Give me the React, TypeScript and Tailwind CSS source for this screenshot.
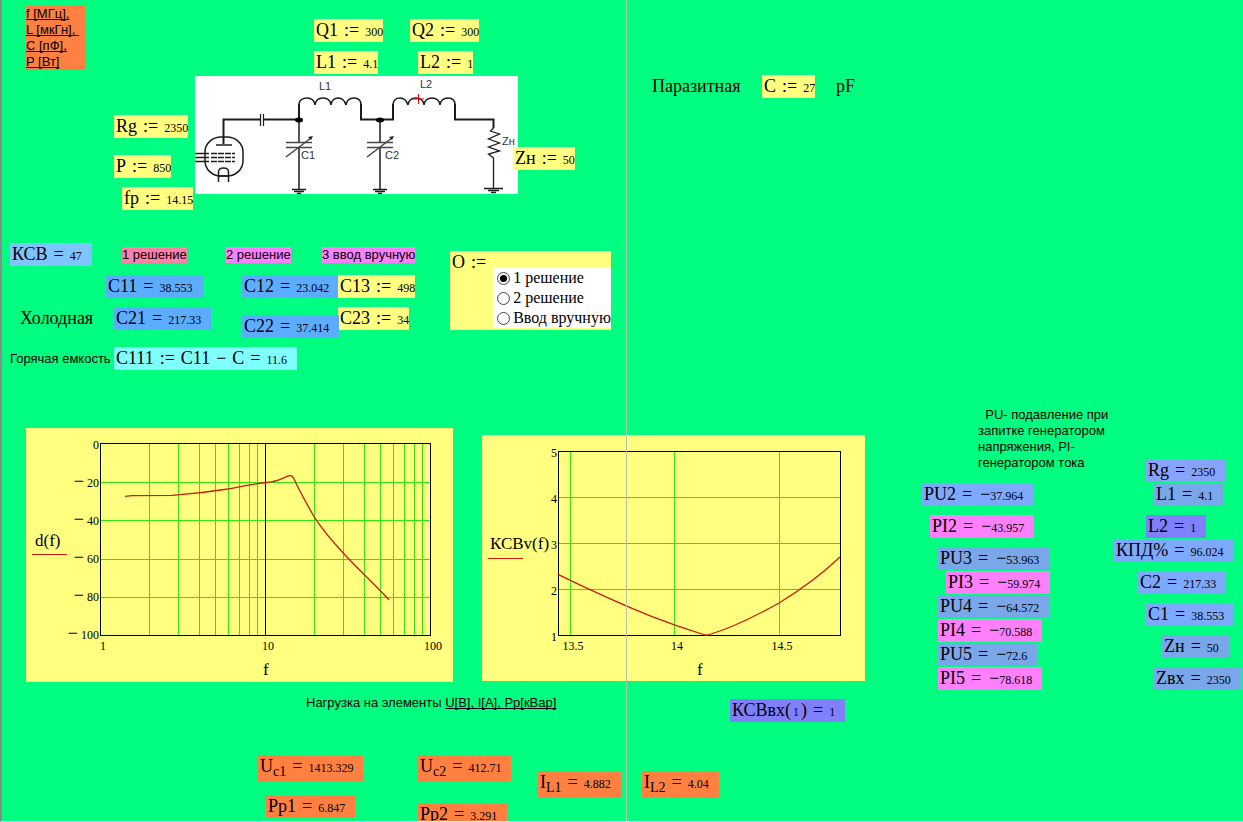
import React, { useState } from 'react';

interface MathRegion {
  at: string; // place on the worksheet
  color: string;
  name: React.ReactNode;
  value: string;
}

// Regions the user types values into
const inputs: MathRegion[] = [
  { at: 'left-[314px] top-[19px]', color: 'bg-[#ffff80]', name: 'Q1', value: '300' },
  { at: 'left-[410px] top-[19px]', color: 'bg-[#ffff80]', name: 'Q2', value: '300' },
  { at: 'left-[314px] top-[51px]', color: 'bg-[#ffff80]', name: 'L1', value: '4.1' },
  { at: 'left-[418px] top-[51px]', color: 'bg-[#ffff80]', name: 'L2', value: '1' },
  { at: 'left-[114px] top-[115px]', color: 'bg-[#ffff80]', name: 'Rg', value: '2350' },
  { at: 'left-[114px] top-[155px]', color: 'bg-[#ffff80]', name: 'P', value: '850' },
  { at: 'left-[122px] top-[187px]', color: 'bg-[#ffff80]', name: 'fp', value: '14.15' },
  { at: 'left-[513px] top-[147px]', color: 'bg-[#ffff80]', name: 'Zн', value: '50' },
  { at: 'left-[762px] top-[75px]', color: 'bg-[#ffff80]', name: 'C', value: '27' },
  { at: 'left-[338px] top-[275px] z-10', color: 'bg-[#ffff80]', name: 'C13', value: '498' },
  { at: 'left-[338px] top-[307px]', color: 'bg-[#ffff80]', name: 'C23', value: '34' },
];

// Regions that show a computed value
const results: MathRegion[] = [
  { at: 'left-[10px] top-[243px]', color: 'bg-[#80c4ff]', name: 'КСВ', value: '47' },
  { at: 'left-[106px] top-[275px]', color: 'bg-[#5cacff]', name: 'C11', value: '38.553' },
  { at: 'left-[242px] top-[275px]', color: 'bg-[#5cacff]', name: 'C12', value: '23.042' },
  { at: 'left-[114px] top-[307px]', color: 'bg-[#5cacff]', name: 'C21', value: '217.33' },
  { at: 'left-[242px] top-[315px]', color: 'bg-[#5cacff]', name: 'C22', value: '37.414' },

  { at: 'left-[922px] top-[483px]', color: 'bg-[#7daaff]', name: 'PU2', value: '−37.964' },
  { at: 'left-[930px] top-[515px]', color: 'bg-[#ff80ff]', name: 'PI2', value: '−43.957' },
  { at: 'left-[938px] top-[547px]', color: 'bg-[#7aa6ea]', name: 'PU3', value: '−53.963' },
  { at: 'left-[946px] top-[571px]', color: 'bg-[#ff80ff]', name: 'PI3', value: '−59.974' },
  { at: 'left-[938px] top-[595px]', color: 'bg-[#7aa6ea]', name: 'PU4', value: '−64.572' },
  { at: 'left-[938px] top-[619px]', color: 'bg-[#ff80ff]', name: 'PI4', value: '−70.588' },
  { at: 'left-[938px] top-[643px]', color: 'bg-[#7aa6ea]', name: 'PU5', value: '−72.6' },
  { at: 'left-[938px] top-[667px]', color: 'bg-[#ff80ff]', name: 'PI5', value: '−78.618' },

  { at: 'left-[1146px] top-[459px]', color: 'bg-[#88a4fa]', name: 'Rg', value: '2350' },
  { at: 'left-[1154px] top-[483px]', color: 'bg-[#7aa6ea]', name: 'L1', value: '4.1' },
  { at: 'left-[1146px] top-[515px]', color: 'bg-[#8080ff]', name: 'L2', value: '1' },
  { at: 'left-[1114px] top-[539px]', color: 'bg-[#7daaff]', name: 'КПД%', value: '96.024' },
  { at: 'left-[1138px] top-[571px]', color: 'bg-[#7daaff]', name: 'C2', value: '217.33' },
  { at: 'left-[1146px] top-[603px]', color: 'bg-[#7daaff]', name: 'C1', value: '38.553' },
  { at: 'left-[1162px] top-[635px]', color: 'bg-[#7aa6ea]', name: 'Zн', value: '50' },
  { at: 'left-[1154px] top-[667px]', color: 'bg-[#7aa6ea]', name: 'Zвх', value: '2350' },
  {
    at: 'left-[730px] top-[699px]',
    color: 'bg-[#8080ff]',
    name: <>КСВвх(<span className="mx-0.5 text-xs">1</span>)</>,
    value: '1',
  },
  { at: 'left-[266px] top-[795px]', color: 'bg-[#ff8040]', name: 'Pp1', value: '6.847' },
  { at: 'left-[418px] top-[803px]', color: 'bg-[#ff8040]', name: 'Pp2', value: '3.291' },
];

// Loads, named with a subscript
const loads = [
  { at: 'left-[258px] top-[755px]', name: 'U', sub: 'c1', value: '1413.329' },
  { at: 'left-[418px] top-[755px]', name: 'U', sub: 'c2', value: '412.71' },
  { at: 'left-[538px] top-[771px]', name: 'I', sub: 'L1', value: '4.882' },
  { at: 'left-[642px] top-[771px]', name: 'I', sub: 'L2', value: '4.04' },
];

const solutions = ['1 решение', '2 решение', 'Ввод вручную'];

function Value({ text }: { text: string }) {
  const negative = text.startsWith('−');
  return (
    <span className="text-xs leading-none">
      {negative && <span className="ml-0.5 text-lg leading-none">−</span>}
      {negative ? text.slice(1) : text}
    </span>
  );
}

function InputRegion({ at, color, name, value }: MathRegion) {
  return (
    <div className={`absolute flex items-baseline gap-1.5 h-[23px] pl-0.5 leading-[23px] ${at} ${color}`}>
      <span>{name}</span>
      <span>:=</span>
      <Value text={value} />
    </div>
  );
}

function ResultRegion({ at, color, name, value }: MathRegion) {
  return (
    <div className={`absolute flex items-baseline gap-1.5 h-[23px] pl-0.5 pr-2.5 leading-[23px] ${at} ${color}`}>
      <span>{name}</span>
      <span>=</span>
      <Value text={value} />
    </div>
  );
}

function Ground({ x }: { x: number }) {
  return <path d={`M${x - 7} 113.5h14M${x - 5} 115.5h10M${x - 2} 117.5h4`} />;
}

function VariableCapacitor({ x }: { x: number }) {
  return (
    <>
      <path d={`M${x} 44V66M${x} 71V113`} />
      <path d={`M${x - 13} 66.5h26M${x - 13} 71.5h26`} stroke="#444" />
      <path d={`M${x - 13} 81L${x + 12} 62`} stroke="#444" />
      <path d={`M${x + 14} 60l-5 1l3 3z`} fill="#222" stroke="none" />
      <Ground x={x} />
    </>
  );
}

function Schematic() {
  return (
    <svg className="absolute left-[195px] top-[76px] bg-white" width="323" height="118" viewBox="0 0 323 118" role="img" aria-label="Pi-L">
      <g fill="none" stroke="#1c1c1c" strokeWidth="1.5">
        {/* tube */}
        <path d="M28.5 68V43.5H65" strokeWidth="2" />
        <rect x="10" y="61" width="38" height="39" rx="16" ry="15" />
        <path d="M21 69h16" stroke="#555" strokeWidth="2" />
        <path d="M0 77.5h14M0 81.5h14M0 85.5h14" />
        <path d="M16 77.5h24M16 81.5h24M16 85.5h24" strokeDasharray="6 1" />
        <path d="M23.5 106V96q0-4 5-4t5 4v10M23 100h11" />
        {/* coupling capacitor */}
        <path d="M65.5 38v12M68.5 38v12" strokeWidth="1.2" />
        <path d="M69 43.5h35" strokeWidth="2" />
        {/* coils with the wires between them */}
        <path d="M104 44V28M166 28V43.5H198V28M260 28V43.5H298.5V52" strokeWidth="2" />
        <path d="M104 28q1-6 8-6t8 7q1-7 8-7t8 7q1-7 7-7t8 7q1-7 8-7t7 7M198 28q1-6 7-6t8 7q1-7 8-7t8 7q1-7 8-7t8 7q1-7 8-7t7 7" />
        <path d="M298.5 52l-3 3l9 3l-11 5l11 4l-11 4l11 4l-11 3l5 4V113" strokeWidth="1.3" />
        <path d="M289 112.5h19M293 114.5h11M296 116.5h5" />
        <VariableCapacitor x={104} />
        <VariableCapacitor x={185} />
      </g>
      <ellipse cx="104" cy="44" rx="4" ry="2.5" />
      <ellipse cx="185" cy="44" rx="4" ry="2.5" />
      <path d="M218 23h11M223.5 18v10" stroke="#f00" strokeWidth="1" />
      <g className="font-['Liberation_Sans'] text-[11px]" fill="#333">
        <text x="124" y="14">L1</text>
        <text x="225" y="12">L2</text>
        <text x="106" y="83">C1</text>
        <text x="190" y="83">C2</text>
        <text x="307" y="69">Zн</text>
      </g>
    </svg>
  );
}

function AttenuationPlot() {
  const decade = [2, 3, 4, 5, 6, 7, 8, 9];
  const x = (f: number) => Math.floor(74 + 165 * Math.log10(f)) + 0.5;
  return (
    <svg className="absolute left-[26px] top-[428px] bg-[#ffff80]" width="427" height="254" viewBox="0 0 427 254" role="img" aria-label="d(f)">
      <g stroke="#2ee60c" shapeRendering="crispEdges">
        {[...decade, ...decade.map(n => n * 10)].map(f => (
          <line key={f} x1={x(f)} x2={x(f)} y1="16" y2="207" />
        ))}
        {[54.5, 92.5, 131.5, 169.5].map(y => (
          <line key={y} x1="75" x2="404" y1={y} y2={y} />
        ))}
      </g>
      <path d="M239.5 15.5V207.5M74.5 15.5H404.5V207.5H74.5Z" fill="none" stroke="#000" shapeRendering="crispEdges" />
      <path
        d="M99 68.3L106 67.7L146 67.3C165 66 180 64.5 202 61C215 58.5 225 56 240 54.5C252 54 256 50 264 47.4Q267 48 268 51C273 62 278 71 288 88.7C296 101 305 112 317 124.7C328 137 342 150 363 171.7"
        fill="none"
        stroke="#d01808"
        strokeWidth="1.3"
      />
      <path d="M6 126.5h35" stroke="#d01808" />
      <g className="text-xs" textAnchor="end">
        <text x="73" y="21">0</text>
        {[20, 40, 60, 80, 100].map((n, i) => (
          <text key={n} x="73" y={59 + i * 38}>
            <tspan className="text-lg">−</tspan> {n}
          </text>
        ))}
      </g>
      <g className="text-xs" textAnchor="middle">
        <text x="77" y="222">1</text>
        <text x="242" y="222">10</text>
        <text x="407" y="222">100</text>
      </g>
      <g className="text-[17px]">
        <text x="9" y="118">d(f)</text>
        <text x="237" y="247">f</text>
      </g>
    </svg>
  );
}

function SwrPlot() {
  return (
    <svg className="absolute left-[482px] top-[435px] bg-[#ffff80]" width="383" height="246" viewBox="0 0 383 246" role="img" aria-label="КСВv(f)">
      <path
        d="M88.5 17V200M192.5 17V200M297.5 17V200M77 62.5H358M77 108.5H358M77 154.5H358"
        stroke="#2ee60c"
        shapeRendering="crispEdges"
      />
      <path d="M76.5 16.5H358.5V200.5H76.5Z" fill="none" stroke="#000" shapeRendering="crispEdges" />
      <path
        d="M76 139.3C110 156 144 171 170 181.7C190 189.5 205 194.5 223 200H226C250 193 272 182 297 168C320 154 338 141 358 122"
        fill="none"
        stroke="#d01808"
        strokeWidth="1.3"
      />
      <path d="M6 123.5h35" stroke="#d01808" />
      <g className="text-xs" textAnchor="end">
        {[5, 4, 3, 2, 1].map((n, i) => (
          <text key={n} x="75" y={22 + i * 46}>{n}</text>
        ))}
      </g>
      <g className="text-xs" textAnchor="middle">
        <text x="91" y="215">13.5</text>
        <text x="195" y="215">14</text>
        <text x="300" y="215">14.5</text>
      </g>
      <g className="text-[17px]">
        <text x="8" y="114">КСВv(f)</text>
        <text x="215" y="240">f</text>
      </g>
    </svg>
  );
}

export default function App() {
  const [solution, setSolution] = useState(0);

  return (
    <main className="relative h-screen overflow-hidden border-l-2 border-b border-l-[#8c8c8c] border-b-[#d8f4e4] bg-[#00ff80] font-['Liberation_Serif',serif] text-lg text-black">
      {/* worksheet origin sits on the window edge, under the border */}
      <div className="absolute inset-y-0 -left-0.5 right-0">
        {/* units */}
        <div className="absolute left-[26px] top-[6px] w-[59px] bg-[#ff8040] font-['Liberation_Sans',sans-serif] text-[13px] leading-4 underline whitespace-pre [text-decoration-skip-ink:none]">
          <p>f [МГц],</p>
          <p>{'L [мкГн], '}</p>
          <p>C [пФ],</p>
          <p>P [Вт]</p>
        </div>

        <Schematic />

        <p className="absolute left-[652px] top-[75px] leading-[23px]">Паразитная</p>
        <p className="absolute left-[836px] top-[75px] leading-[23px]">pF</p>
        <p className="absolute left-[20px] top-[307px] leading-[23px]">Холодная</p>

        {/* column titles and notes */}
        <div className="font-['Liberation_Sans',sans-serif] text-[13px] leading-4 whitespace-pre">
          <h2 className="absolute left-[122px] top-[247px] bg-[#ff80a8]">1 решение</h2>
          <h2 className="absolute left-[226px] top-[247px] bg-[#ff80ff]">2 решение</h2>
          <h2 className="absolute left-[322px] top-[247px] bg-[#ff80ff]">3 ввод вручную</h2>
          <p className="absolute left-[10px] top-[351px]">Горячая емкость</p>
          <p className="absolute left-[978px] top-[407px]">
            {'  PU- подавление при\nзапитке генератором\nнапряжения, PI-\nгенератором тока'}
          </p>
          <p className="absolute left-[306px] top-[695px]">
            Нагрузка на элементы{' '}
            <span className="underline [text-decoration-skip-ink:none]">U[В], I[А], Pp[кВар]</span>
          </p>
        </div>

        {inputs.map(r => (
          <InputRegion key={r.at} {...r} />
        ))}
        {results.map(r => (
          <ResultRegion key={r.at} {...r} />
        ))}

        {/* hot capacitance */}
        <div className="absolute left-[114px] top-[347px] flex items-baseline gap-1.5 h-[23px] bg-[#80ffff] pl-0.5 pr-2.5 leading-[23px]">
          <span>C111</span>
          <span>:=</span>
          <span>C11</span>
          <span>−</span>
          <span>C</span>
          <span>=</span>
          <Value text="11.6" />
        </div>

        {loads.map(l => (
          <div key={l.at} className={`absolute flex items-baseline gap-1.5 h-[27px] bg-[#ff8040] pl-0.5 pr-2.5 leading-[23px] ${l.at}`}>
            <span>
              {l.name}
              <sub className="text-sm leading-none">{l.sub}</sub>
            </span>
            <span>=</span>
            <Value text={l.value} />
          </div>
        ))}

        {/* solution switch */}
        <fieldset className="absolute left-[450px] top-[251px] flex h-[79px] bg-[#ffff80] pl-0.5">
          <span className="flex gap-1.5 leading-[23px]">
            <span>O</span>
            <span>:=</span>
          </span>
          <div className="mt-[17px] ml-[7px] mb-0.5 bg-white pl-1 text-base leading-5">
            {solutions.map((label, i) => (
              <label key={label} className="flex h-5 items-center gap-[3px]">
                <input
                  type="radio"
                  name="solution"
                  checked={solution === i}
                  onChange={() => setSolution(i)}
                  className="grid size-[13px] appearance-none place-items-center rounded-full border border-[#444] bg-white before:size-[7px] before:rounded-full checked:before:bg-black"
                />
                {label}
              </label>
            ))}
          </div>
        </fieldset>

        <AttenuationPlot />
        <SwrPlot />

        {/* right page margin */}
        <div className="absolute inset-y-0 left-[626px] w-px bg-[#b8c0a8]" />
      </div>
    </main>
  );
}
